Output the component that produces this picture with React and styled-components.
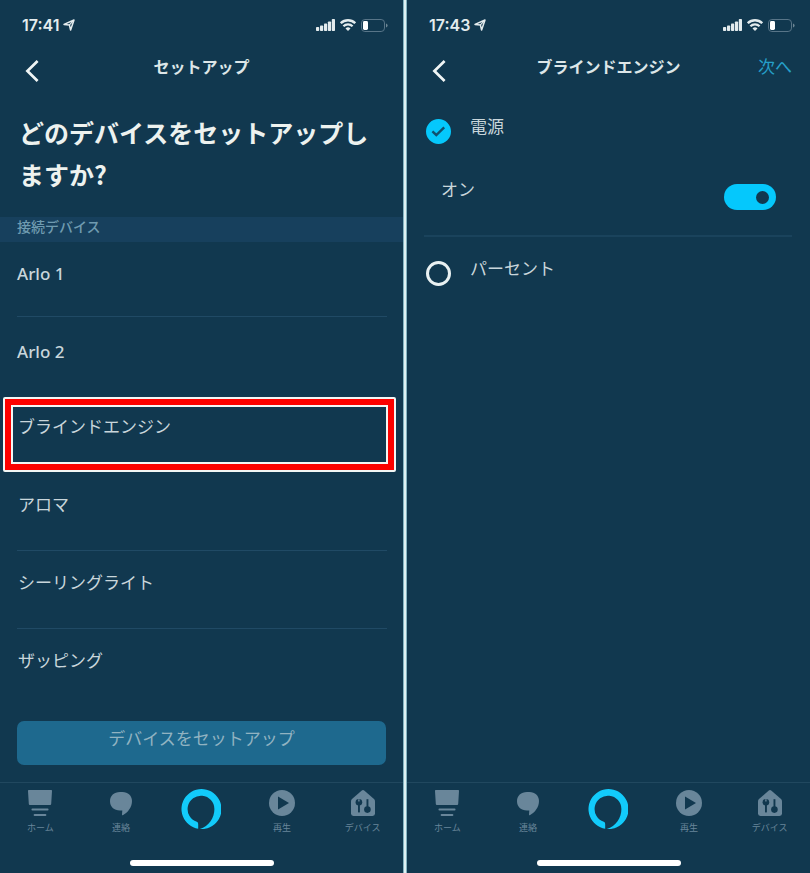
import React, { useState } from 'react';
import styled, { createGlobalStyle } from 'styled-components';

const GlobalStyle = createGlobalStyle`
  * {
    box-sizing: border-box;
  }

  body {
    margin: 0;
    background-color: #11384f;
    font-family: 'Noto Sans CJK JP', sans-serif;
    color: #c9d6db;
  }

  button,
  input {
    margin: 0;
    padding: 0;
    border: none;
    background: none;
    color: inherit;
    font: inherit;
    cursor: pointer;
  }
`;

const Page = styled.div`
  display: grid;
  grid-template-columns: 1fr 4px 1fr;
  min-height: 100vh;
`;

const Separator = styled.div`
  border: solid #84b3c0;
  border-width: 0 1px;
  background-color: #def1f3;
`;

const Screen = styled.section`
  display: flex;
  flex-direction: column;
  min-width: 0;
`;

// Status bar

const StatusBar = styled.div`
  display: flex;
  align-items: center;
  justify-content: space-between;
  padding: 15px 15px 0 22px;
  height: 35px;
  color: #e4ecee;
`;

const Clock = styled.div`
  display: flex;
  align-items: center;
  gap: 4px;
  font-family: Inter, sans-serif;
  font-size: 16px;
  font-weight: 600;
  line-height: 20px;
`;

const StatusIcons = styled.div`
  display: flex;
  align-items: center;
  gap: 5px;
`;

// Navigation bar

const NavBar = styled.header`
  display: grid;
  grid-template-columns: 60px 1fr 60px;
  align-items: start;
  padding: 19px 12px 0;
  height: 52px;
`;

const BackButton = styled.button`
  display: flex;
  justify-self: start;
  padding: 6px 12px 4px 13px;
  color: #f0f5f5;
`;

const NavTitle = styled.h1`
  margin: 0;
  font-size: 16px;
  font-weight: 700;
  line-height: 24px;
  text-align: center;
  color: #dde6e8;
`;

const NextButton = styled.button`
  justify-self: end;
  padding: 0 6px;
  font-size: 17px;
  line-height: 24px;
  color: #259fc8;
`;

// Device list

const Question = styled.h2`
  margin: 0;
  padding: 24px 16px 22px 19px;
  font-size: 25px;
  font-weight: 700;
  line-height: 42px;
  color: #edf2ef;
`;

const SectionLabel = styled.h3`
  margin: 0;
  padding: 0 17px 7px;
  background-color: #17405d;
  font-size: 14px;
  font-weight: 500;
  line-height: 18px;
  color: #6f9bb0;
`;

const DeviceList = styled.ul`
  margin: 0;
  padding: 0 16px 0 17px;
  list-style: none;
`;

const DeviceItem = styled.li`
  position: relative;
  border-bottom: 1px solid ${(props) => (props.$line ? '#204a65' : 'transparent')};
`;

const DeviceButton = styled.button`
  display: block;
  width: 100%;
  padding: ${(props) => (props.$latin ? '22px 0 29px' : '18px 1px 33px')};
  font-family: ${(props) => (props.$latin ? "'Noto Sans', sans-serif" : 'inherit')};
  font-size: 17px;
  font-weight: ${(props) => (props.$latin ? 500 : 400)};
  line-height: 26px;
  text-align: left;

  ${DeviceItem}:first-child & {
    padding-top: 19px;
  }
`;

const Marker = styled.div`
  position: absolute;
  inset: 2px -9px 0 -14px;
  border: 2px solid #f3f7f5;
  border-radius: 2px;
  pointer-events: none;

  &::before {
    content: '';
    position: absolute;
    inset: 0;
    border: 6px solid #fb0200;
  }

  &::after {
    content: '';
    position: absolute;
    inset: 6px;
    border: 2px solid #f3f7f5;
  }
`;

const SetupButton = styled.button`
  margin: auto 17px 17px;
  padding: 4px 0 14px;
  border-radius: 7px;
  background-color: #1e698e;
  font-size: 17px;
  line-height: 26px;
  color: #91b3c1;
`;

// Options

const Options = styled.form`
  padding: 26px 18px 0 17px;
`;

const OptionRow = styled.div`
  display: flex;
  align-items: flex-start;
  gap: 19px;
`;

const RadioBox = styled.span`
  position: relative;
  display: flex;
  margin: 6px 0 0 2px;

  svg {
    position: absolute;
    inset: 0;
    pointer-events: none;
  }
`;

const Radio = styled.input`
  appearance: none;
  width: 25px;
  height: 25px;
  border: 3px solid #e9f1f2;
  border-radius: 50%;

  &:checked {
    border-color: #05c8fc;
    background-color: #05c8fc;
  }
`;

const OptionLabel = styled.label`
  font-size: 17px;
  line-height: 26px;
`;

const PowerRow = styled.div`
  display: flex;
  align-items: flex-start;
  justify-content: space-between;
  margin-bottom: 18px;
  padding: 32px 16px 25px 17px;
  border-bottom: 2px solid #1a435c;
`;

const Switch = styled.input`
  appearance: none;
  display: flex;
  align-items: center;
  justify-content: flex-start;
  width: 52px;
  height: 26px;
  margin-top: 8px;
  padding: 0 7px;
  border-radius: 13px;
  background-color: #567b91;

  &::before {
    content: '';
    width: 13px;
    height: 13px;
    border-radius: 50%;
    background-color: #11384f;
  }

  &:checked {
    justify-content: flex-end;
    background-color: #05c8fc;
  }
`;

// Tab bar

const TabBar = styled.nav`
  display: flex;
  margin-top: auto;
  border-top: 1px solid #21485f;

  ${SetupButton} + & {
    margin-top: 0;
  }
`;

const Tab = styled.button`
  display: flex;
  flex: 1;
  flex-direction: column;
  align-items: center;
  gap: 5px;
  height: 77px;
  padding-top: ${(props) => (props.$main ? '6px' : '7px')};
  font-size: 9px;
  line-height: 14px;
  color: ${(props) => (props.$main ? '#12cbfb' : '#69869a')};
`;

const HomeIndicator = styled.div`
  width: 144px;
  height: 6px;
  margin: 0 auto 7px;
  border-radius: 3px;
  background-color: #fff;
`;

const LocationIcon = () => (
  <svg width="12" height="12" viewBox="0 0 12 12" fill="none" stroke="currentColor" strokeWidth="1.5" strokeLinejoin="round">
    <path d="M1 5.4 L11 1 L7.6 11 L6.4 6 Z" />
    <path d="M6.2 6.2 L10.4 1.6" strokeWidth="1.2" />
  </svg>
);

const SignalIcon = () => (
  <svg width="19" height="12" viewBox="0 0 19 12" fill="currentColor">
    <rect x="0" y="8" width="3.2" height="4" rx="0.8" />
    <rect x="4" y="6.4" width="3.2" height="5.6" rx="0.8" />
    <rect x="8" y="4.6" width="3.2" height="7.4" rx="0.8" />
    <rect x="11.9" y="2.4" width="3.2" height="9.6" rx="0.8" />
    <rect x="15.8" y="0" width="3.2" height="12" rx="0.8" />
  </svg>
);

const WifiIcon = () => (
  <svg width="16" height="12" viewBox="0 0 16 12" fill="none" stroke="currentColor" strokeWidth="2.3">
    <path d="M0.8 4.2 A10.3 10.3 0 0 1 15.2 4.2" />
    <path d="M3.4 7.3 A6.6 6.6 0 0 1 12.6 7.3" />
    <path d="M8 12 L5.5 9.4 A3.6 3.6 0 0 1 10.5 9.4 Z" fill="currentColor" stroke="none" />
  </svg>
);

const BatteryIcon = () => (
  <svg width="27" height="13" viewBox="0 0 27 13">
    <rect x="0.5" y="0.5" width="23" height="12" rx="3.4" fill="none" stroke="#587588" />
    <path d="M25 4.5 Q26.6 5 26.6 6.5 Q26.6 8 25 8.5 Z" fill="#6c8694" />
    <rect x="2" y="2" width="5" height="9" rx="1.4" fill="#fff" />
  </svg>
);

const BackIcon = () => (
  <svg width="14" height="22" viewBox="0 0 14 22" fill="none" stroke="currentColor" strokeWidth="2.7">
    <path d="M12.6 1 L2.4 11 L12.6 21" />
  </svg>
);

const CheckIcon = () => (
  <svg width="25" height="25" viewBox="0 0 25 25" fill="none" stroke="#11506e" strokeWidth="2.4">
    <path d="M6.4 12.4 L10.3 16 L18.2 8.4" />
  </svg>
);

const HomeIcon = () => (
  <svg width="24" height="26" viewBox="0 0 24 26" fill="currentColor">
    <path d="M0.6 0 H23.4 Q24 0 24 0.7 L23.2 14 Q23.1 15 22.2 15 H1.8 Q0.9 15 0.8 14 L0 0.7 Q0 0 0.6 0 Z" />
    <rect x="3.5" y="18.5" width="17" height="2" rx="0.8" />
    <rect x="5.7" y="24" width="12.6" height="2" rx="0.8" />
  </svg>
);

const ChatIcon = () => (
  <svg width="22" height="26" viewBox="0 0 22 26" fill="currentColor">
    <path d="M10 2 H12.5 C18 2 22 5.8 22 11 C22 17 18 22.6 12.8 25.2 Q12 25.5 12 24.6 L12.3 20.6 H10 C4 20.6 0 16.6 0 11.3 C0 5.8 4 2 10 2 Z" />
  </svg>
);

const AlexaIcon = () => (
  <svg width="40" height="40" viewBox="0 0 40 40" fill="currentColor">
    <path d="M17.2 39.8 A20 20 0 1 1 18.8 40 C28 37 33.4 29 33.4 20 A13.4 13.4 0 1 0 15.8 32.8 Q17.2 33.4 17.2 35 Z" />
  </svg>
);

const PlayIcon = () => (
  <svg width="26" height="26" viewBox="0 0 26 26">
    <circle cx="13" cy="13" r="13" fill="currentColor" />
    <path d="M9 6.4 L20 13 L9 19.6 Z" fill="#11384f" />
  </svg>
);

const DevicesIcon = () => (
  <svg width="24" height="26" viewBox="0 0 24 26">
    <path d="M10.8 0.5 Q12 -0.4 13.2 0.5 L23 9 Q24 10 24 11.2 V23.6 Q24 26 21.6 26 H2.4 Q0 26 0 23.6 V11.2 Q0 10 1 9 Z" fill="currentColor" />
    <g fill="#11384f">
      <circle cx="7.9" cy="12.2" r="3.3" />
      <rect x="7" y="13" width="1.9" height="9.4" />
      <circle cx="16.4" cy="19.6" r="3.3" />
      <rect x="15.5" y="9.2" width="1.9" height="10" />
    </g>
    <path d="M7.9 9.2 V11.4" stroke="currentColor" strokeWidth="1.4" />
  </svg>
);

const devices = ['Arlo 1', 'Arlo 2', 'ブラインドエンジン', 'アロマ', 'シーリングライト', 'ザッピング'];
const markedIndex = 2;

const tabs = [
  { label: 'ホーム', Icon: HomeIcon },
  { label: '連絡', Icon: ChatIcon },
  { Icon: AlexaIcon, main: true },
  { label: '再生', Icon: PlayIcon },
  { label: 'デバイス', Icon: DevicesIcon },
];

const Header = ({ time, title, action }) => (
  <>
    <StatusBar>
      <Clock>
        {time}
        <LocationIcon />
      </Clock>
      <StatusIcons>
        <SignalIcon />
        <WifiIcon />
        <BatteryIcon />
      </StatusIcons>
    </StatusBar>
    <NavBar>
      <BackButton type="button" aria-label="戻る">
        <BackIcon />
      </BackButton>
      <NavTitle>{title}</NavTitle>
      {action && <NextButton type="button">{action}</NextButton>}
    </NavBar>
  </>
);

const Footer = () => (
  <>
    <TabBar>
      {tabs.map(({ label, Icon, main }) => (
        <Tab key={label || 'alexa'} type="button" $main={main} aria-label={label || 'Alexa'}>
          <Icon />
          {label}
        </Tab>
      ))}
    </TabBar>
    <HomeIndicator />
  </>
);

const DeviceScreen = () => (
  <Screen>
    <Header time="17:41" title="セットアップ" />
    <Question>どのデバイスをセットアップしますか?</Question>
    <SectionLabel>接続デバイス</SectionLabel>
    <DeviceList>
      {devices.map((name, i) => (
        <DeviceItem
          key={name}
          $line={i !== devices.length - 1 && i !== markedIndex && i !== markedIndex - 1}
        >
          <DeviceButton type="button" $latin={/^[A-Z]/.test(name)}>
            {name}
          </DeviceButton>
          {i === markedIndex && <Marker />}
        </DeviceItem>
      ))}
    </DeviceList>
    <SetupButton type="button">デバイスをセットアップ</SetupButton>
    <Footer />
  </Screen>
);

const OptionScreen = () => {
  const [option, setOption] = useState('power');
  const [isOn, setIsOn] = useState(true);

  const renderOption = (value, label) => (
    <OptionRow>
      <RadioBox>
        <Radio
          type="radio"
          id={value}
          name="option"
          checked={option === value}
          onChange={() => setOption(value)}
        />
        {option === value && <CheckIcon />}
      </RadioBox>
      <OptionLabel htmlFor={value}>{label}</OptionLabel>
    </OptionRow>
  );

  return (
    <Screen>
      <Header time="17:43" title="ブラインドエンジン" action="次へ" />
      <Options>
        {renderOption('power', '電源')}
        <PowerRow>
          <OptionLabel htmlFor="power-state">オン</OptionLabel>
          <Switch
            type="checkbox"
            role="switch"
            id="power-state"
            checked={isOn}
            onChange={(e) => setIsOn(e.target.checked)}
          />
        </PowerRow>
        {renderOption('percent', 'パーセント')}
      </Options>
      <Footer />
    </Screen>
  );
};

const App = () => (
  <>
    <GlobalStyle />
    <Page>
      <DeviceScreen />
      <Separator />
      <OptionScreen />
    </Page>
  </>
);

export default App;
